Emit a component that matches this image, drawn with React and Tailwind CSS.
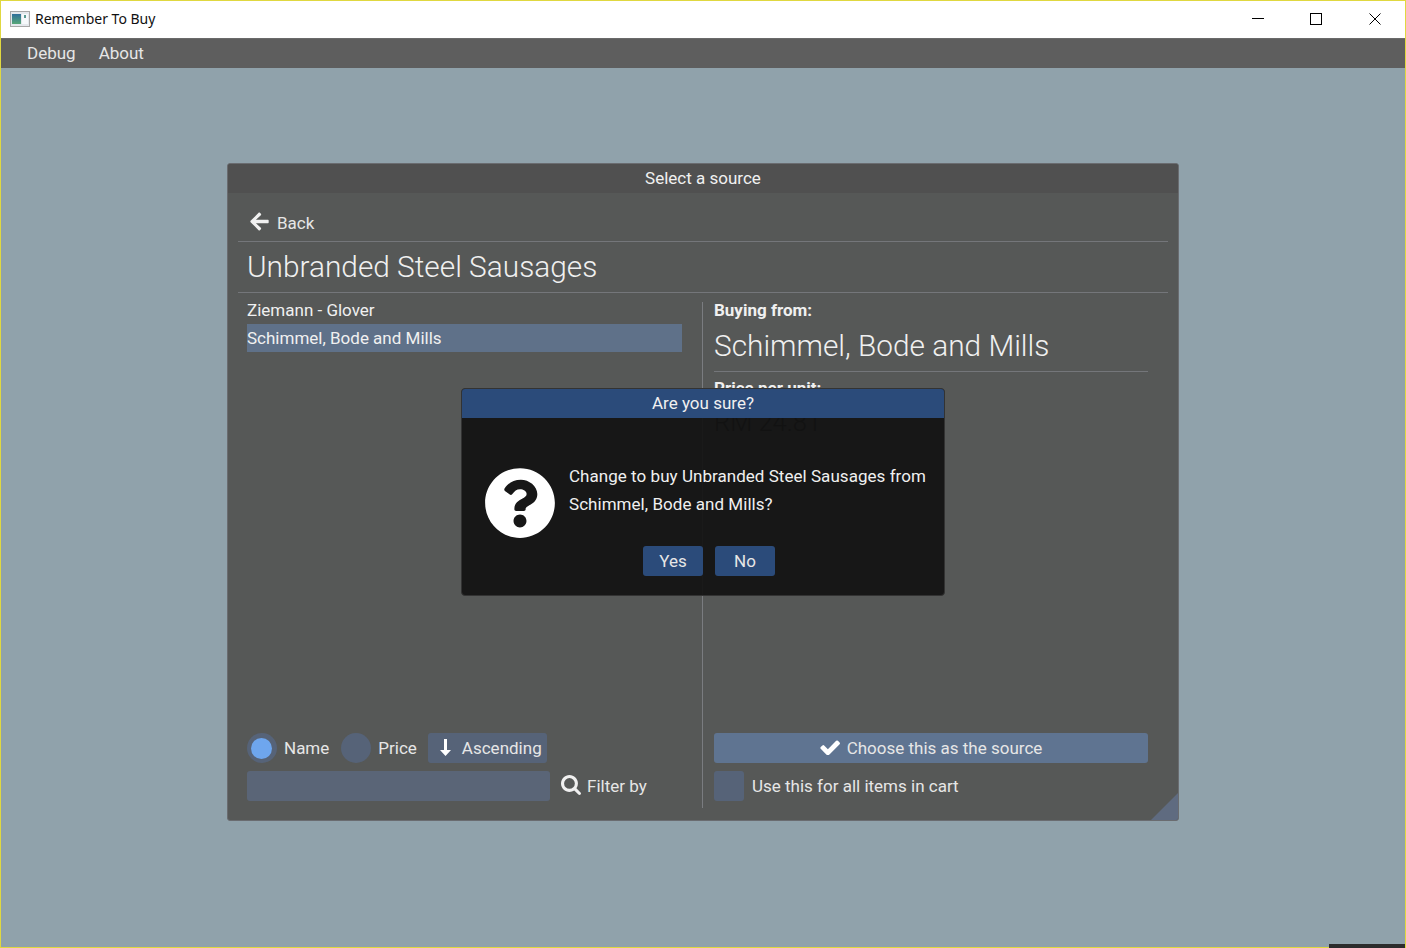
import React from 'react';
import { FaArrowLeft, FaQuestionCircle } from 'react-icons/fa';

const TitleBar = () =>
{
  return (
    <div className="flex h-[37px] items-center bg-white pb-[1px]">
      <svg className="ml-[9px] h-[16px] w-[20px]" viewBox="0 0 20 16">
        <defs>
          <linearGradient id="winIcon" x1="0" y1="0" x2="0" y2="1">
            <stop offset="0" stopColor="#2f6f9a" />
            <stop offset="1" stopColor="#58a878" />
          </linearGradient>
        </defs>
        <rect x="0.500" y="0.500" width="19" height="15" fill="#e4e8ec" stroke="#a8a8a8" />
        <rect x="2" y="3" width="9" height="10" fill="url(#winIcon)" />
        <rect x="12" y="3" width="6" height="10" fill="#f6f9fb" />
        <rect x="14" y="4" width="2" height="3" fill="#5a9a92" />
      </svg>
      <span className="mb-[2px] ml-[5px] font-['Noto_Sans',sans-serif] text-[14px] text-[#111]">Remember To Buy</span>
      <div className="ml-auto flex items-center">
        <svg className="h-[14px] w-[14px]" viewBox="0 0 14 14">
          <path d="M1 6.500H13" stroke="#000" strokeWidth="1" />
        </svg>
        <svg className="ml-[44px] h-[14px] w-[14px]" viewBox="0 0 14 14">
          <rect x="1.500" y="1.500" width="11" height="11" fill="none" stroke="#000" strokeWidth="1" />
        </svg>
        <svg className="ml-[45px] mr-[23px] h-[14px] w-[14px]" viewBox="0 0 14 14">
          <path d="M1.500 1.500L12.500 12.500M12.500 1.500L1.500 12.500" stroke="#000" strokeWidth="1" />
        </svg>
      </div>
    </div>
  );
};

const MenuBar = () =>
{
  return (
    <div className="flex h-[30px] items-center gap-[23px] border-t border-t-[#6a6a6a] bg-[#5e5e5e] pl-[26px] text-[#e6e6e6]">
      <span>Debug</span>
      <span>About</span>
    </div>
  );
};

const SortControls = () =>
{
  return (
    <div className="flex h-[30px] items-center">
      <div className="flex h-[30px] w-[30px] items-center justify-center rounded-full bg-[#566378]">
        <div className="mr-[1px] h-[21px] w-[21px] rounded-full bg-[#6ea6ee]" />
      </div>
      <span className="ml-[7px] mt-[2px] text-[#e6e6e6]">Name</span>
      <div className="ml-[12px] h-[30px] w-[30px] rounded-full bg-[#566378]" />
      <span className="ml-[7px] mt-[2px] text-[#e6e6e6]">Price</span>
      <div className="ml-[11px] flex h-[30px] w-[119px] items-center rounded-[3px] bg-[#566378] text-[#e6e6e6]">
        <svg className="mb-[2px] ml-[12px] h-[17px] w-[11px]" viewBox="0 0 11 17">
          <path d="M4 0h3v11h4l-5.500 6L0 11h4z" fill="#fff" />
        </svg>
        <span className="ml-[11px] mt-[2px]">Ascending</span>
      </div>
    </div>
  );
};

const LeftColumn = () =>
{
  return (
    <div className="-mt-[7px] flex w-[464px] flex-col pb-[7px] pl-[9px] pr-[20px]">
      <div className="flex h-[29px] items-center pt-[3px] text-[#f0f0f0]">Ziemann - Glover</div>
      <div className="flex h-[28px] items-center bg-[#5f7189] pt-[2px] text-[#f0f0f0]">Schimmel, Bode and Mills</div>
      <div className="mt-auto">
        <SortControls />
        <div className="mt-[8px] flex h-[30px] items-center">
          <div className="h-[30px] w-[303px] rounded-[3px] bg-[#5a6577]" />
          <svg className="mb-[3px] ml-[11px] h-[20px] w-[20px]" viewBox="64 128 1664 1664">
            <path
              fill="#f0f0f0"
              d="M1216 832q0-185-131.500-316.500t-316.500-131.500-316.500 131.500-131.500 316.500 131.500 316.500 316.500 131.500 316.500-131.500 131.500-316.500zm512 832q0 52-38 90t-90 38q-54 0-90-38l-343-342q-179 124-399 124-143 0-273.500-55.500t-225-150-150-225-55.500-273.500 55.500-273.500 150-225 225-150 273.500-55.500 273.500 55.500 225 150 150 225 55.500 273.500q0 220-124 399l343 343q37 37 37 90z"
            />
          </svg>
          <span className="ml-[6px] mt-[2px] text-[#e6e6e6]">Filter by</span>
        </div>
      </div>
    </div>
  );
};

const RightColumn = () =>
{
  return (
    <div className="flex flex-1 flex-col border-l border-l-[#7a7c80] pb-[7px] pl-[11px] pr-[30px]">
      <div className="flex h-[18px] items-center font-bold text-[#f0f0f0]">Buying from:</div>
      <div className="mt-[5px] flex h-[47px] items-center border-b border-b-[#74767a] pb-[5px] text-[29.800px] font-light leading-none text-[#f0f0f0]">Schimmel, Bode and Mills</div>
      <div className="mt-[8px] flex h-[18px] items-center font-bold text-[#f0f0f0]">Price per unit:</div>
      <div className="mt-[12px] text-[25.500px] font-light leading-none text-[#1a1a1a]">RM 24.81</div>
      <div className="mt-auto">
        <div className="flex h-[30px] items-center justify-center rounded-[3px] bg-[#5f7491] text-[#e6e6e6]">
          <svg className="mb-[2px] mr-[7px] h-[15px] w-[20px]" viewBox="93 330 1580 1120">
            <path
              fill="#fff"
              d="M1671 566q0 40-28 68l-724 724-136 136q-28 28-68 28t-68-28l-136-136-362-362q-28-28-28-68t28-68l136-136q28-28 68-28t68 28l294 295 656-657q28-28 68-28t68 28l136 136q28 28 28 68z"
            />
          </svg>
          <span className="mt-[2px]">Choose this as the source</span>
        </div>
        <div className="mt-[8px] flex h-[30px] items-center">
          <div className="h-[30px] w-[30px] rounded-[3px] bg-[#566378]" />
          <span className="ml-[8px] mt-[2px] text-[#e6e6e6]">Use this for all items in cart</span>
        </div>
      </div>
    </div>
  );
};

const SourcePanel = () =>
{
  return (
    <div className="relative flex h-[658px] w-[952px] flex-col overflow-hidden rounded-[3px] border border-[#6a6c70] bg-[#565857]">
      <div className="flex h-[29px] items-center justify-center bg-[#505050] text-[#f0f0f0]">Select a source</div>
      <div className="mx-[10px] flex h-[49px] items-center border-b border-b-[#74767a] pl-[12px] pt-[12px] text-[#e6e6e6]">
        <FaArrowLeft className="mb-[3px] h-[21px] w-[19px] text-[#f0f0f0]" />
        <span className="ml-[8px] mt-[2px]">Back</span>
      </div>
      <div className="mx-[10px] flex h-[51px] items-center border-b border-b-[#74767a] pl-[9px] text-[29.800px] font-light leading-none text-[#f0f0f0]">Unbranded Steel Sausages</div>
      <div className="flex flex-1 pb-[12px] pl-[10px] pt-[9px]">
        <LeftColumn />
        <RightColumn />
      </div>
      <div className="absolute bottom-0 right-0 h-0 w-0 border-b-[27px] border-l-[27px] border-b-[#5f6b80] border-l-transparent" />
    </div>
  );
};

const ConfirmDialog = () =>
{
  return (
    <div className="absolute left-[460px] top-[387px] flex h-[208px] w-[484px] flex-col overflow-hidden rounded-[4px] border border-[#333] bg-[#111111]/92">
      <div className="flex h-[29px] shrink-0 items-center justify-center bg-[#2b4b7a] text-[#f0f0f0]">Are you sure?</div>
      <div className="flex items-start pl-[22px] pt-[44px]">
        <FaQuestionCircle className="mt-[5px] h-[72px] w-[72px] shrink-0 text-white" />
        <p className="ml-[13px] leading-[28px] tracking-[0.04px] text-[#f0f0f0]">
          Change to buy Unbranded Steel Sausages from<br />Schimmel, Bode and Mills?
        </p>
      </div>
      <div className="ml-[12px] mt-[7px] flex justify-center gap-[12px]">
        <div className="flex h-[30px] w-[60px] items-center justify-center rounded-[3px] bg-[#2b4b7a] pt-[2px] text-[#e6e6e6]">Yes</div>
        <div className="flex h-[30px] w-[60px] items-center justify-center rounded-[3px] bg-[#2b4b7a] pt-[2px] text-[#e6e6e6]">No</div>
      </div>
    </div>
  );
};

const App = () =>
{
  return (
    <div className="relative h-[948px] w-[1406px] border border-[#e0d840] bg-[#90a2ab] font-['Roboto',sans-serif] text-[17px]">
      <TitleBar />
      <MenuBar />
      <div className="flex justify-center pt-[95px]">
        <SourcePanel />
      </div>
      <ConfirmDialog />
      <div className="absolute -bottom-px right-0 h-[4px] w-[76px] bg-[#2c2c2c]" />
    </div>
  );
};

export default App;
